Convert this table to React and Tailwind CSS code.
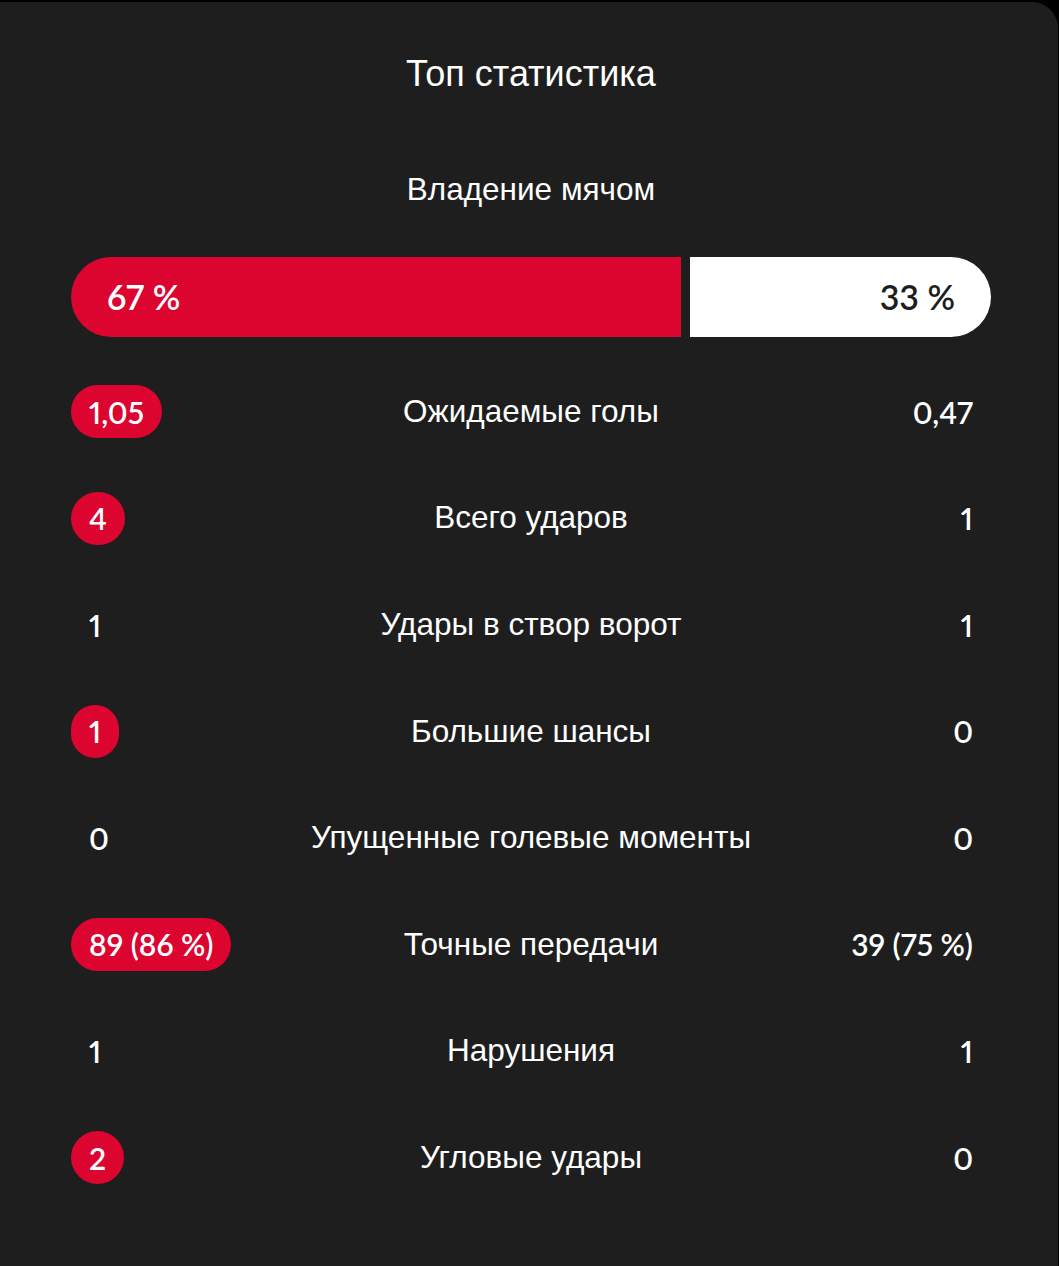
import React from 'react';

const stats = [
  { label: 'Ожидаемые голы', home: '1,05', away: '0,47', win: 'home' },
  { label: 'Всего ударов', home: '4', away: '1', win: 'home' },
  { label: 'Удары в створ ворот', home: '1', away: '1', win: null },
  { label: 'Большие шансы', home: '1', away: '0', win: 'home' },
  { label: 'Упущенные голевые моменты', home: '0', away: '0', win: null },
  { label: 'Точные передачи', home: '89 (86 %)', away: '39 (75 %)', win: 'home' },
  { label: 'Нарушения', home: '1', away: '1', win: null },
  { label: 'Угловые удары', home: '2', away: '0', win: 'home' },
];

const numFont = { fontFamily: 'Lato, "Noto Sans", sans-serif', fontVariantNumeric: 'proportional-nums' };

function Value({ value, highlight, align }) {
  return (
    <div className={`flex ${align === 'right' ? 'justify-end' : 'justify-start'}`}>
      <span
        style={numFont}
        className={`h-[53px] min-w-[46px] px-[18px] flex items-center justify-center rounded-full text-[30px] font-semibold text-white leading-none ${
          highlight ? 'bg-[#dc0530]' : ''
        }`}
      >
        {value}
      </span>
    </div>
  );
}

export default function App() {
  const home = 67;
  const away = 33;

  return (
    <div className="min-h-screen bg-black pt-[2px] pr-[1px]" style={{ fontFamily: '"Liberation Sans", Arial, sans-serif' }}>
      <div className="bg-[#1e1e1e] rounded-tr-[26px] min-h-[1264px] pl-[71px] pr-[67px] pt-[54px]">
        <h2 className="text-center text-white text-[36px] leading-[36px]">Топ статистика</h2>

        <div className="mt-[79px] text-center text-white text-[31.5px] leading-[36px]">Владение мячом</div>

        {/* полоса владения */}
        <div className="mt-[50px] flex gap-[9px] h-[80px]">
          <div
            className="bg-[#dc0530] rounded-l-full flex items-center pl-[36px]"
            style={{ width: `${home}%` }}
          >
            <span style={numFont} className="text-white text-[34px] font-semibold leading-none">{home} %</span>
          </div>
          <div
            className="bg-white rounded-r-full flex items-center justify-end pr-[36px]"
            style={{ width: `${away}%` }}
          >
            <span style={numFont} className="text-[#1e1e1e] text-[34px] font-semibold leading-none">{away} %</span>
          </div>
        </div>

        <div className="mt-[48px] flex flex-col gap-[53.6px]">
          {stats.map((s) => (
            <div key={s.label} className="grid grid-cols-[1fr_auto_1fr] items-center h-[53px]">
              <Value value={s.home} highlight={s.win === 'home'} align="left" />
              <div className="text-white text-[31.5px] text-center whitespace-nowrap">{s.label}</div>
              <Value value={s.away} highlight={s.win === 'away'} align="right" />
            </div>
          ))}
        </div>
      </div>
    </div>
  );
}
